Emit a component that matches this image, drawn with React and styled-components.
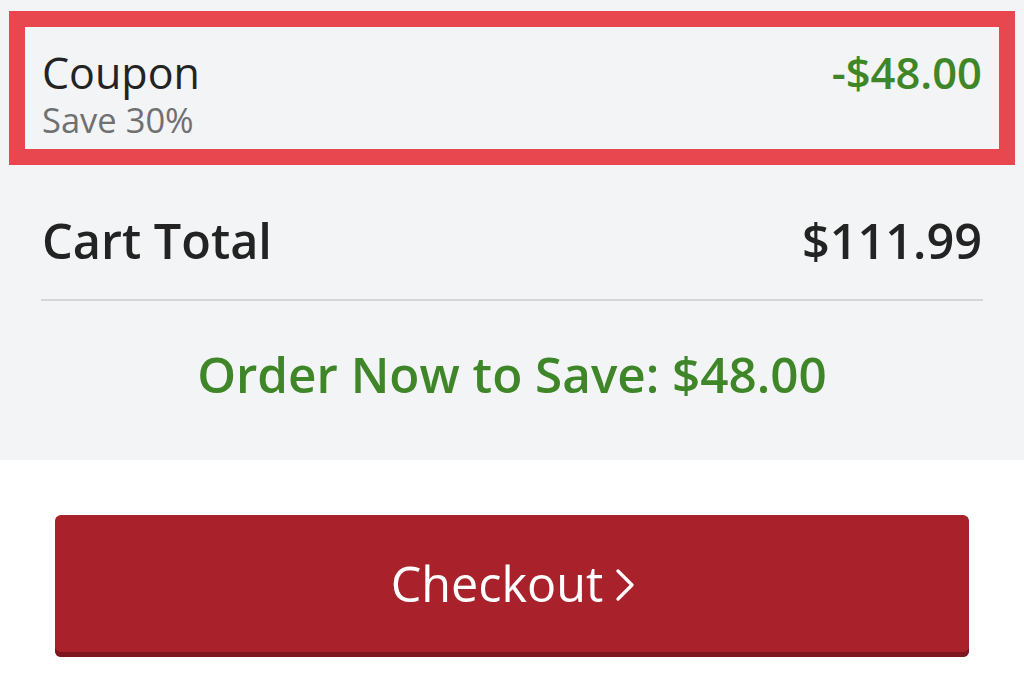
import React from 'react';
import styled, { createGlobalStyle } from 'styled-components';

const GlobalStyle = createGlobalStyle`
  html, body {
    margin: 0;
    padding: 0;
    background: #ffffff;
    font-family: 'Open Sans', 'Noto Sans', sans-serif;
    -webkit-font-smoothing: antialiased;
  }
`;

const colors = {
  summaryBg: '#f3f4f6',
  text: '#232323',
  muted: '#707070',
  green: '#3f8628',
  highlight: '#e8474f',
  rule: '#d5d6d8',
  button: '#a9222b',
  buttonEdge: '#7e1820',
};

const App = () => {
  return (
    <>
      <GlobalStyle />
      <Page>
        <Summary>
          <CouponBox>
            <div>
              <Label>Coupon</Label>
              <SubLabel>Save 30%</SubLabel>
            </div>
            <Amount green>-$48.00</Amount>
          </CouponBox>
          <TotalRow>
            <TotalLabel>Cart Total</TotalLabel>
            <TotalLabel>$111.99</TotalLabel>
          </TotalRow>
          <Divider />
          <Savings>Order Now to Save: $48.00</Savings>
        </Summary>
        <Actions>
          <CheckoutButton type="button">
            Checkout
            <svg width="20" height="32" viewBox="0 0 20 32" fill="none">
              <path
                d="M3 2 L17 16 L3 30"
                stroke="#fff"
                strokeWidth="3.2"
                strokeLinecap="round"
                strokeLinejoin="round"
              />
            </svg>
          </CheckoutButton>
        </Actions>
      </Page>
    </>
  );
};

const Page = styled.div`
  width: 1024px;
  height: 673px;
  overflow: hidden;
  background: #fff;
`;

const Summary = styled.section`
  background: ${colors.summaryBg};
  padding: 11px 0 56px;
`;

const CouponBox = styled.div`
  margin: 0 9px;
  border: 16px solid ${colors.highlight};
  padding: 20px 17px 9px;
  display: flex;
  justify-content: space-between;
  align-items: flex-start;
`;

const Label = styled.div`
  font-size: 43px;
  line-height: 52px;
  color: ${colors.text};
`;

const SubLabel = styled.div`
  margin-top: 1px;
  font-size: 34.5px;
  line-height: 40px;
  color: ${colors.muted};
`;

const Amount = styled.div`
  font-size: 43.5px;
  line-height: 52px;
  font-weight: 600;
  color: ${(p) => (p.green ? colors.green : colors.text)};
`;

const TotalRow = styled.div`
  display: flex;
  justify-content: space-between;
  align-items: center;
  padding: 45px 42px 29px;
`;

const TotalLabel = styled.div`
  font-size: 48.6px;
  line-height: 60px;
  font-weight: 600;
  color: ${colors.text};
`;

const Divider = styled.hr`
  margin: 0 41px;
  border: none;
  height: 2px;
  background: ${colors.rule};
`;

const Savings = styled.div`
  margin-top: 43px;
  text-align: center;
  font-size: 49.4px;
  line-height: 60px;
  font-weight: 600;
  color: ${colors.green};
`;

const Actions = styled.div`
  padding: 55px 55px 0;
`;

const CheckoutButton = styled.button`
  width: 100%;
  height: 142px;
  border: none;
  border-radius: 6px;
  background: ${colors.button};
  box-shadow: inset 0 -5px 0 ${colors.buttonEdge};
  color: #fff;
  font-family: 'Open Sans', 'Noto Sans', sans-serif;
  font-size: 48.5px;
  font-weight: 400;
  display: flex;
  align-items: center;
  justify-content: center;
  gap: 12px;
  padding: 0 0 6px 2px;
  cursor: pointer;

  svg {
    margin-top: 4px;
  }
`;

export default App;
